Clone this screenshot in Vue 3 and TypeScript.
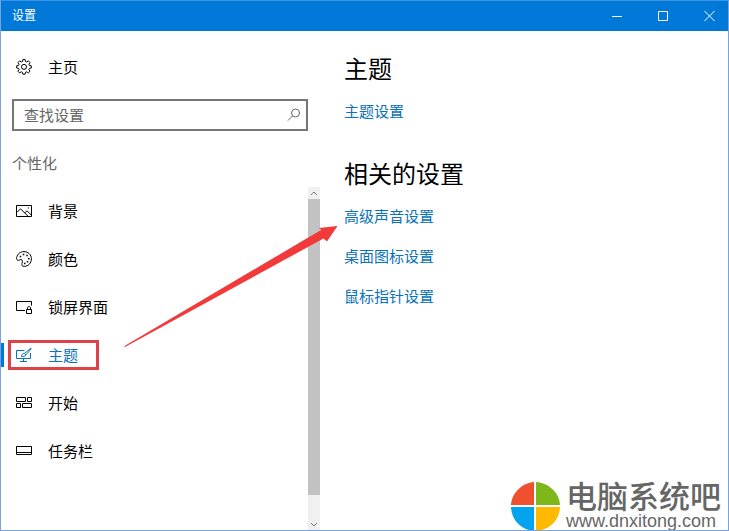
<script setup lang="ts">
import { ref } from 'vue'

interface NavItem {
  id: string
  label: string
}

const items: NavItem[] = [
  { id: 'background', label: '背景' },
  { id: 'colors', label: '颜色' },
  { id: 'lock', label: '锁屏界面' },
  { id: 'themes', label: '主题' },
  { id: 'start', label: '开始' },
  { id: 'taskbar', label: '任务栏' },
]
const active = ref('themes')
const query = ref('')
const related: string[] = ['高级声音设置', '桌面图标设置', '鼠标指针设置']
</script>

<template>
  <div class="window">
    <header class="titlebar">
      <span class="title">设置</span>
      <div class="controls">
        <button type="button" aria-label="最小化">
          <svg width="11" height="11" viewBox="0 0 11 11"><path d="M0 5.500h10" /></svg>
        </button>
        <button type="button" aria-label="最大化">
          <svg width="11" height="11" viewBox="0 0 11 11"><path d="M.5.5h9v9h-9z" /></svg>
        </button>
        <button type="button" aria-label="关闭">
          <svg width="11" height="11" viewBox="0 0 11 11"><path d="M.5 0l10 10M10.500 0l-10 10" /></svg>
        </button>
      </div>
    </header>

    <div class="body">
      <aside class="sidebar">
        <a class="home" href="#home">
          <svg class="icon" viewBox="0 0 16 16">
            <path d="M6.900.6h2.200l.4 1.900 1.200.5 1.700-1.100 1.600 1.600-1.100 1.700.5 1.200 1.900.4v2.200l-1.900.4-.5 1.200 1.100 1.700-1.600 1.600-1.700-1.100-1.200.5-.4 1.900H6.900l-.4-1.900-1.200-.5-1.700 1.100L2 12.300l1.100-1.700-.5-1.200L.7 9V6.800l1.900-.4.5-1.200L2 3.500l1.600-1.600L5.300 3l1.200-.5z" />
            <circle cx="8" cy="7.900" r="2.500" />
          </svg>
          <span>主页</span>
        </a>

        <form class="search" role="search" @submit.prevent>
          <input v-model="query" type="text" placeholder="查找设置" aria-label="查找设置" />
          <button type="submit" aria-label="搜索">
            <svg width="14" height="14" viewBox="0 0 14 14"><circle cx="8.500" cy="5" r="4" /><path d="M5.600 7.900L.8 12.700" /></svg>
          </button>
        </form>

        <h3 class="group">个性化</h3>

        <div class="scroller">
          <nav class="nav">
            <a
              v-for="item in items"
              :key="item.id"
              class="nav-item"
              :class="{ active: item.id === active }"
              :href="'#' + item.id"
              @click.prevent="active = item.id"
            >
              <svg class="icon" viewBox="0 0 16 16">
                <template v-if="item.id === 'background'">
                  <path d="M.5 2.500h15v11H.5zM.8 9.500l3.700-3.700 7.700 7.600M8.800 10l2.200-2.200 4.300 4.300" />
                  <path d="M12 5h1" />
                </template>
                <template v-else-if="item.id === 'colors'">
                  <path d="M.7 6.600C1.300 3 4.300.6 8 .6c4.200 0 7.400 3.200 7.400 7.300 0 4.200-3.200 7.500-7.200 7.500-2.100 0-2.700-1.300-2.200-2.900.5-1.500.8-3.500-.8-3.900C3.700 8.200 3 9.900 1.700 9.300.7 8.900.5 7.800.7 6.600z" />
                  <path class="dots" d="M3.700 4.700h1.500v1.500H3.700zM6.800 2.700h1.500v1.500H6.800zM10.300 3.700h1.500v1.500h-1.500zM12 6.900h1.500v1.500H12zM10.800 10h1.500v1.500h-1.500zM8 11.800h1.500v1.500H8z" />
                </template>
                <template v-else-if="item.id === 'lock'">
                  <path d="M9 11.500H.5v-9h15v4" />
                  <path d="M10.500 10.500h5v4h-5zM11.500 10.500V9c0-2 3-2 3 0v1.500" />
                </template>
                <template v-else-if="item.id === 'themes'">
                  <path d="M8.500 3.500h-8v8h14V6M4 14.500h7M7.500 11.500v3" />
                  <path d="M14.800 1.200L8.500 6.400l1.400 1.500 5.300-6.100zM8.500 6.400c-2-.1-2.600 1.300-3.200 3 2 .2 4.200.1 4.600-1.500" />
                </template>
                <template v-else-if="item.id === 'start'">
                  <path d="M.5 2.500h9v4h-9zM11.500 2.500h4v4h-4zM.5 8.500h4v4h-4zM6.500 8.500h9v4h-9z" />
                </template>
                <template v-else>
                  <path d="M.5 3.500h15v8H.5zM.5 9.500h15" />
                </template>
              </svg>
              <span>{{ item.label }}</span>
              <i v-if="item.id === 'themes'" class="highlight"></i>
            </a>
          </nav>
          <div class="scrollbar" aria-hidden="true">
            <svg class="arrow" viewBox="0 0 12 12"><path d="M3 8l3-3 3 3" /></svg>
            <div class="thumb"></div>
            <div class="track"></div>
            <svg class="arrow" viewBox="0 0 12 12"><path d="M3 5l3 3 3-3" /></svg>
          </div>
        </div>
      </aside>

      <main class="content">
        <section>
          <h2>主题</h2>
          <a href="#theme-settings">主题设置</a>
        </section>
        <section>
          <h2>相关的设置</h2>
          <a v-for="link in related" :key="link" href="#related">{{ link }}</a>
        </section>
      </main>
    </div>

    <svg class="pointer" width="216" height="124" viewBox="0 0 216 124" aria-hidden="true">
      <path d="M.5 122L197 6 195 4 213.500 2 203 17.500 199.500 14.500 1 123z" />
    </svg>

    <div class="watermark">
      <svg width="50" height="50" viewBox="0 0 50 50" aria-hidden="true">
        <path fill="#f1502f" d="M23 1v23H0C.5 12 11 2 23 1z" />
        <path fill="#7db71a" d="M25 1v23h24C48.500 12 38 2 25 1z" />
        <path fill="#02a4ef" d="M23 26v24C11 49 .5 40 0 26z" />
        <path fill="#ffb901" d="M25 26v24c13-1 23.500-10 24-24z" />
      </svg>
      <div class="brand">
        <strong>电脑系统吧</strong>
        <span>www.dnxitong.com</span>
      </div>
    </div>
  </div>
</template>

<style>
body {
  margin: 0;
}
</style>

<style scoped>
* {
  box-sizing: border-box;
}
.window {
  position: relative;
  display: flex;
  flex-direction: column;
  min-height: 100vh;
  border: 1px solid #78a3dc;
  border-top-color: #3d95e6;
  background: #fff;
  color: #000;
  font: 15px/20px "Noto Sans CJK SC", sans-serif;
  overflow: hidden;
}
a {
  color: inherit;
  text-decoration: none;
}
svg {
  flex: none;
  fill: none;
  stroke: currentColor;
}
button {
  display: flex;
  align-items: center;
  justify-content: center;
  padding: 0;
  border: 0;
  background: none;
  color: inherit;
}
.titlebar {
  display: flex;
  justify-content: space-between;
  height: 30px;
  padding-left: 11px;
  background: #0078d7;
  color: #fff;
}
.title {
  font-size: 12px;
  line-height: 28px;
}
.controls {
  display: flex;
  gap: 8px;
}
.controls button {
  width: 38px;
}
.body {
  display: flex;
  flex: 1;
}
.sidebar {
  display: flex;
  flex-direction: column;
  width: 319px;
}
.icon {
  width: 16px;
  height: 16px;
}
.home,
.nav-item {
  display: flex;
  align-items: center;
  gap: 16px;
  height: 48px;
  padding-left: 15px;
}
.home {
  margin-top: 12px;
}
.search {
  display: flex;
  height: 32px;
  margin: 8px 12px 0 11px;
  border: 2px solid #767676;
}
.search input {
  flex: 1;
  min-width: 0;
  padding: 0 10px;
  border: 0;
  outline: 0;
  background: none;
  color: #000;
  font: inherit;
}
.search input::placeholder {
  color: #666;
  opacity: 1;
}
.search button {
  width: 24px;
  color: #666;
}
.group {
  margin: 22px 0 14px 11px;
  color: #666;
  font-size: 15px;
  font-weight: 400;
  line-height: 20px;
}
.scroller {
  display: flex;
  flex: 1;
}
.nav {
  flex: 1;
}
.nav-item {
  position: relative;
}
.nav-item.active {
  color: #0a72b8;
}
.nav-item.active::before {
  content: "";
  position: absolute;
  left: 0;
  top: 12px;
  width: 3px;
  height: 24px;
  background: #0078d7;
}
.highlight {
  position: absolute;
  left: 7px;
  top: 9px;
  width: 91px;
  height: 30px;
  border: 3px solid #dc4247;
}
.dots {
  fill: currentColor;
  stroke: none;
}
.scrollbar {
  display: flex;
  flex-direction: column;
  width: 12px;
  background: #f0f0f0;
  color: #777;
}
.arrow {
  width: 12px;
  height: 12px;
}
.thumb {
  flex: 296;
  background: #c2c2c2;
}
.track {
  flex: 23;
}
.content {
  display: flex;
  flex-direction: column;
  gap: 35px;
  flex: 1;
  padding: 20px 24px;
}
section {
  display: flex;
  flex-direction: column;
  align-items: flex-start;
  gap: 20px;
}
h2 {
  margin: 0 0 -4px;
  font-size: 24px;
  font-weight: 400;
  line-height: 34px;
}
section a {
  color: #0a72b8;
}
.pointer {
  position: absolute;
  left: 123px;
  top: 223px;
}
.pointer path {
  fill: #f23a3b;
  stroke: none;
}
.watermark {
  position: absolute;
  right: -1px;
  bottom: -1px;
  display: flex;
  gap: 5px;
  width: 220px;
  height: 50px;
  padding-left: 2px;
  background: #fff;
  color: #666;
}
.watermark svg {
  stroke: none;
}
.brand {
  display: flex;
  flex-direction: column;
}
.brand strong {
  font-size: 31px;
  font-weight: 500;
  line-height: 28px;
}
.brand span {
  font-family: "Liberation Sans", sans-serif;
  font-size: 18px;
  line-height: 25px;
}
</style>
